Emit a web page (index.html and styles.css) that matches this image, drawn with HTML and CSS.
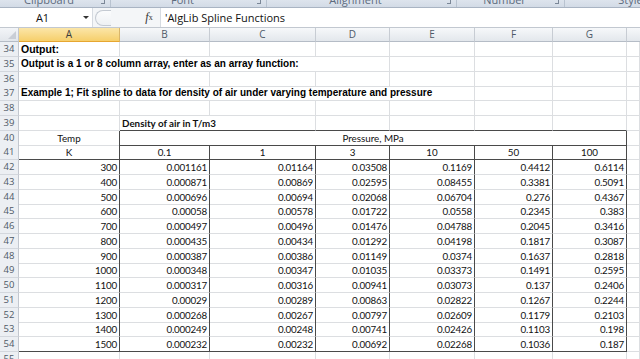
FILE: index.html
```html
<!DOCTYPE html>
<html>
<head>
<meta charset="utf-8">
<link rel="stylesheet" href="styles.css">
</head>
<body>
<div class="app">
  <div class="ribbon">
    <div class="group g1"><span class="glabel">Clipboard</span><span class="launch"></span></div>
    <div class="group g2"><span class="glabel">Font</span><span class="launch"></span></div>
    <div class="group g3"><span class="glabel">Alignment</span><span class="launch"></span></div>
    <div class="group g4"><span class="glabel">Number</span><span class="launch"></span></div>
    <div class="group g5"><span class="glabel right">Styles</span></div>
  </div>
  <div class="fbar">
    <div class="namebox"><span class="nbtext">A1</span><span class="dd"></span></div>
    <div class="gripzone"><span class="grip"></span></div>
    <div class="fx"><i>f</i><sub>x</sub></div>
    <div class="formula">'AlgLib Spline Functions</div>
  </div>
  <div class="sheet">
    <div class="row hdr">
      <div class="corner"><svg width="8" height="8" viewBox="0 0 8 8"><path d="M8 0 L8 8 L0 8 Z" fill="#c9ced6"/></svg></div>
      <div class="ch sel">A</div><div class="ch">B</div><div class="ch">C</div><div class="ch">D</div><div class="ch">E</div><div class="ch">F</div><div class="ch">G</div><div class="ch last"></div>
    </div>
    <div class="row"><div class="rh">34</div><div class="c t-b big">Output:</div><div class="c"></div><div class="c"></div><div class="c"></div><div class="c"></div><div class="c"></div><div class="c"></div><div class="c"></div></div>
    <div class="row"><div class="rh">35</div><div class="c t-b s4">Output is a 1 or 8 column array, enter as an array function:</div><div class="c"></div><div class="c"></div><div class="c"></div><div class="c"></div></div>
    <div class="row"><div class="rh">36</div><div class="c"></div><div class="c"></div><div class="c"></div><div class="c"></div><div class="c"></div><div class="c"></div><div class="c"></div><div class="c"></div></div>
    <div class="row"><div class="rh">37</div><div class="c t-b s5">Example 1; Fit spline to data for density of air under varying temperature and pressure</div><div class="c"></div><div class="c"></div><div class="c"></div></div>
    <div class="row"><div class="rh">38</div><div class="c"></div><div class="c"></div><div class="c"></div><div class="c"></div><div class="c"></div><div class="c"></div><div class="c"></div><div class="c"></div></div>
    <div class="row"><div class="rh">39</div><div class="c"></div><div class="c t-cb s2 db">Density of air in T/m3</div><div class="c db"></div><div class="c db"></div><div class="c db"></div><div class="c db"></div><div class="c"></div></div>
    <div class="row"><div class="rh">40</div><div class="c ctr dr">Temp</div><div class="c ctr s6 dr db">Pressure, MPa</div><div class="c"></div></div>
    <div class="row"><div class="rh">41</div><div class="c ctr dr db">K</div><div class="c ctr dr db">0.1</div><div class="c ctr dr db">1</div><div class="c ctr dr db">3</div><div class="c ctr dr db">10</div><div class="c ctr dr db">50</div><div class="c ctr dr db">100</div><div class="c"></div></div>
    <div class="row"><div class="rh">42</div><div class="c num dr">300</div><div class="c num dr">0.001161</div><div class="c num dr">0.01164</div><div class="c num dr">0.03508</div><div class="c num dr">0.1169</div><div class="c num dr">0.4412</div><div class="c num dr">0.6114</div><div class="c"></div></div>
    <div class="row"><div class="rh">43</div><div class="c num dr">400</div><div class="c num dr">0.000871</div><div class="c num dr">0.00869</div><div class="c num dr">0.02595</div><div class="c num dr">0.08455</div><div class="c num dr">0.3381</div><div class="c num dr">0.5091</div><div class="c"></div></div>
    <div class="row"><div class="rh">44</div><div class="c num dr">500</div><div class="c num dr">0.000696</div><div class="c num dr">0.00694</div><div class="c num dr">0.02068</div><div class="c num dr">0.06704</div><div class="c num dr">0.276</div><div class="c num dr">0.4367</div><div class="c"></div></div>
    <div class="row"><div class="rh">45</div><div class="c num dr">600</div><div class="c num dr">0.00058</div><div class="c num dr">0.00578</div><div class="c num dr">0.01722</div><div class="c num dr">0.0558</div><div class="c num dr">0.2345</div><div class="c num dr">0.383</div><div class="c"></div></div>
    <div class="row"><div class="rh">46</div><div class="c num dr">700</div><div class="c num dr">0.000497</div><div class="c num dr">0.00496</div><div class="c num dr">0.01476</div><div class="c num dr">0.04788</div><div class="c num dr">0.2045</div><div class="c num dr">0.3416</div><div class="c"></div></div>
    <div class="row"><div class="rh">47</div><div class="c num dr">800</div><div class="c num dr">0.000435</div><div class="c num dr">0.00434</div><div class="c num dr">0.01292</div><div class="c num dr">0.04198</div><div class="c num dr">0.1817</div><div class="c num dr">0.3087</div><div class="c"></div></div>
    <div class="row"><div class="rh">48</div><div class="c num dr">900</div><div class="c num dr">0.000387</div><div class="c num dr">0.00386</div><div class="c num dr">0.01149</div><div class="c num dr">0.0374</div><div class="c num dr">0.1637</div><div class="c num dr">0.2818</div><div class="c"></div></div>
    <div class="row"><div class="rh">49</div><div class="c num dr">1000</div><div class="c num dr">0.000348</div><div class="c num dr">0.00347</div><div class="c num dr">0.01035</div><div class="c num dr">0.03373</div><div class="c num dr">0.1491</div><div class="c num dr">0.2595</div><div class="c"></div></div>
    <div class="row"><div class="rh">50</div><div class="c num dr">1100</div><div class="c num dr">0.000317</div><div class="c num dr">0.00316</div><div class="c num dr">0.00941</div><div class="c num dr">0.03073</div><div class="c num dr">0.137</div><div class="c num dr">0.2406</div><div class="c"></div></div>
    <div class="row"><div class="rh">51</div><div class="c num dr">1200</div><div class="c num dr">0.00029</div><div class="c num dr">0.00289</div><div class="c num dr">0.00863</div><div class="c num dr">0.02822</div><div class="c num dr">0.1267</div><div class="c num dr">0.2244</div><div class="c"></div></div>
    <div class="row"><div class="rh">52</div><div class="c num dr">1300</div><div class="c num dr">0.000268</div><div class="c num dr">0.00267</div><div class="c num dr">0.00797</div><div class="c num dr">0.02609</div><div class="c num dr">0.1179</div><div class="c num dr">0.2103</div><div class="c"></div></div>
    <div class="row"><div class="rh">53</div><div class="c num dr">1400</div><div class="c num dr">0.000249</div><div class="c num dr">0.00248</div><div class="c num dr">0.00741</div><div class="c num dr">0.02426</div><div class="c num dr">0.1103</div><div class="c num dr">0.198</div><div class="c"></div></div>
    <div class="row"><div class="rh">54</div><div class="c num dr db">1500</div><div class="c num dr db">0.000232</div><div class="c num dr db">0.00232</div><div class="c num dr db">0.00692</div><div class="c num dr db">0.02268</div><div class="c num dr db">0.1036</div><div class="c num dr db">0.187</div><div class="c"></div></div>
    <div class="row"><div class="rh">55</div><div class="c"></div><div class="c"></div><div class="c"></div><div class="c"></div><div class="c"></div><div class="c"></div><div class="c"></div><div class="c"></div></div>
  </div>
</div>
</body>
</html>
```

FILE: styles.css
```css
* { box-sizing: border-box; }
html, body { margin: 0; padding: 0; background: #ffffff; }
.app { width: 640px; height: 359px; overflow: hidden; }

/* ribbon group labels strip (cut off) */
.ribbon {
  height: 8px;
  display: flex;
  overflow: hidden;
  background: linear-gradient(#dde4ed, #d3dbe6);
  border-bottom: 1px solid #a9b4c3;
}
.group {
  position: relative;
  display: flex;
  align-items: flex-start;
  justify-content: center;
  border-right: 1px solid #b9c3d0;
  padding-right: 12px;
}
.g1 { width: 111px; }
.g2 { width: 156px; }
.g3 { width: 190px; }
.g4 { width: 108px; }
.g5 { flex: 1; border-right: none; justify-content: flex-end; padding-right: 0; }
.glabel {
  font-family: "Open Sans", "Noto Sans", sans-serif;
  font-size: 11px;
  line-height: 14px;
  margin-top: -7px;
  color: #5d6b7d;
  white-space: nowrap;
}
.glabel.right { margin-right: -8px; }
.launch {
  position: absolute;
  right: 5px;
  top: 0;
  width: 4px;
  height: 4px;
  border-right: 1px solid #7b8797;
  border-bottom: 1px solid #7b8797;
}

/* formula bar */
.fbar {
  height: 20px;
  display: flex;
  align-items: stretch;
  background: #ffffff;
  border-bottom: 1px solid #c2c8d0;
  font-family: "Open Sans", "Noto Sans", sans-serif;
}
.namebox {
  width: 93px;
  display: flex;
  align-items: center;
  border-right: 1px solid #d6dbe1;
}
.nbtext {
  width: 85px;
  text-align: center;
  font-size: 11px;
  color: #111;
}
.dd {
  width: 0; height: 0;
  border-left: 3px solid transparent;
  border-right: 3px solid transparent;
  border-top: 3px solid #333;
  margin-left: -2px;
}
.gripzone {
  width: 45px;
  display: flex;
  align-items: center;
  background: #f4f6f8;
  padding-left: 2px;
}
.grip {
  width: 16px;
  height: 16px;
  border: 1px solid #c4cad2;
  border-right: none;
  border-radius: 8px 0 0 8px;
  background: linear-gradient(#fbfcfd, #eef1f4);
}
.fx {
  width: 22px;
  display: flex;
  align-items: center;
  justify-content: center;
  font-family: "Liberation Serif", serif;
  font-size: 12px;
  color: #333;
  background: #f4f6f8;
}
.fx sub { font-size: 8px; vertical-align: -1px; }
.formula {
  flex: 1;
  display: flex;
  align-items: center;
  padding-left: 4px;
  font-size: 11px;
  color: #111;
  border-left: 1px solid #d6dbe1;
}

/* sheet */
.row {
  display: grid;
  grid-template-columns: 19px 101px 90px 106px 74px 85px 78px 74px 1fr;
  height: 14.76px;
}
.row.hdr { height: 14px; }
.corner {
  background: linear-gradient(#f3f5f8, #e2e6eb);
  border-right: 1px solid #c2c7cf;
  border-bottom: 1px solid #b5bcc6;
  display: flex;
  align-items: flex-end;
  justify-content: flex-end;
  padding: 0 2px 2px 0;
}
.ch {
  background: linear-gradient(#f6f8fa, #e3e7ec);
  border-right: 1px solid #c7ccd3;
  border-bottom: 1px solid #b5bcc6;
  font-family: "Open Sans", "Noto Sans", sans-serif;
  font-size: 10px;
  line-height: 13px;
  color: #4e5a68;
  text-align: center;
}
.ch.sel {
  background: linear-gradient(#fbe6a9, #f6cf6b);
  border-bottom: 1px solid #e6a631;
  border-right: 1px solid #d9b56a;
  color: #3d3d3d;
}
.ch.last { border-right: none; }
.rh {
  background: #eceff3;
  border-right: 1px solid #c2c7cf;
  border-bottom: 1px solid #d3d7dd;
  font-family: "Open Sans", "Noto Sans", sans-serif;
  font-size: 9.5px;
  line-height: 14px;
  color: #4f5a66;
  text-align: center;
}
.c {
  border-right: 1px solid #dcdee1;
  border-bottom: 1px solid #dcdee1;
  white-space: nowrap;
  overflow: visible;
  padding: 0 2px;
  font-family: "Lato", "Liberation Sans", sans-serif;
  font-size: 9.8px;
  letter-spacing: -0.2px;
  line-height: 14px;
  color: #111;
}
.t-b {
  font-family: "Liberation Sans", Arial, sans-serif;
  font-weight: bold;
  font-size: 10px;
  letter-spacing: 0;
  padding-left: 2px;
  color: #000;
}
.t-b.big { font-size: 10.5px; }
.t-cb { font-weight: bold; letter-spacing: 0; }
.ctr { text-align: center; letter-spacing: 0; }
.num { text-align: right; }
.s2 { grid-column: span 2; }
.s4 { grid-column: span 4; }
.s5 { grid-column: span 5; }
.s6 { grid-column: span 6; }
.dr { border-right-color: #4a4a4a; }
.db { border-bottom-color: #4a4a4a; }
```
